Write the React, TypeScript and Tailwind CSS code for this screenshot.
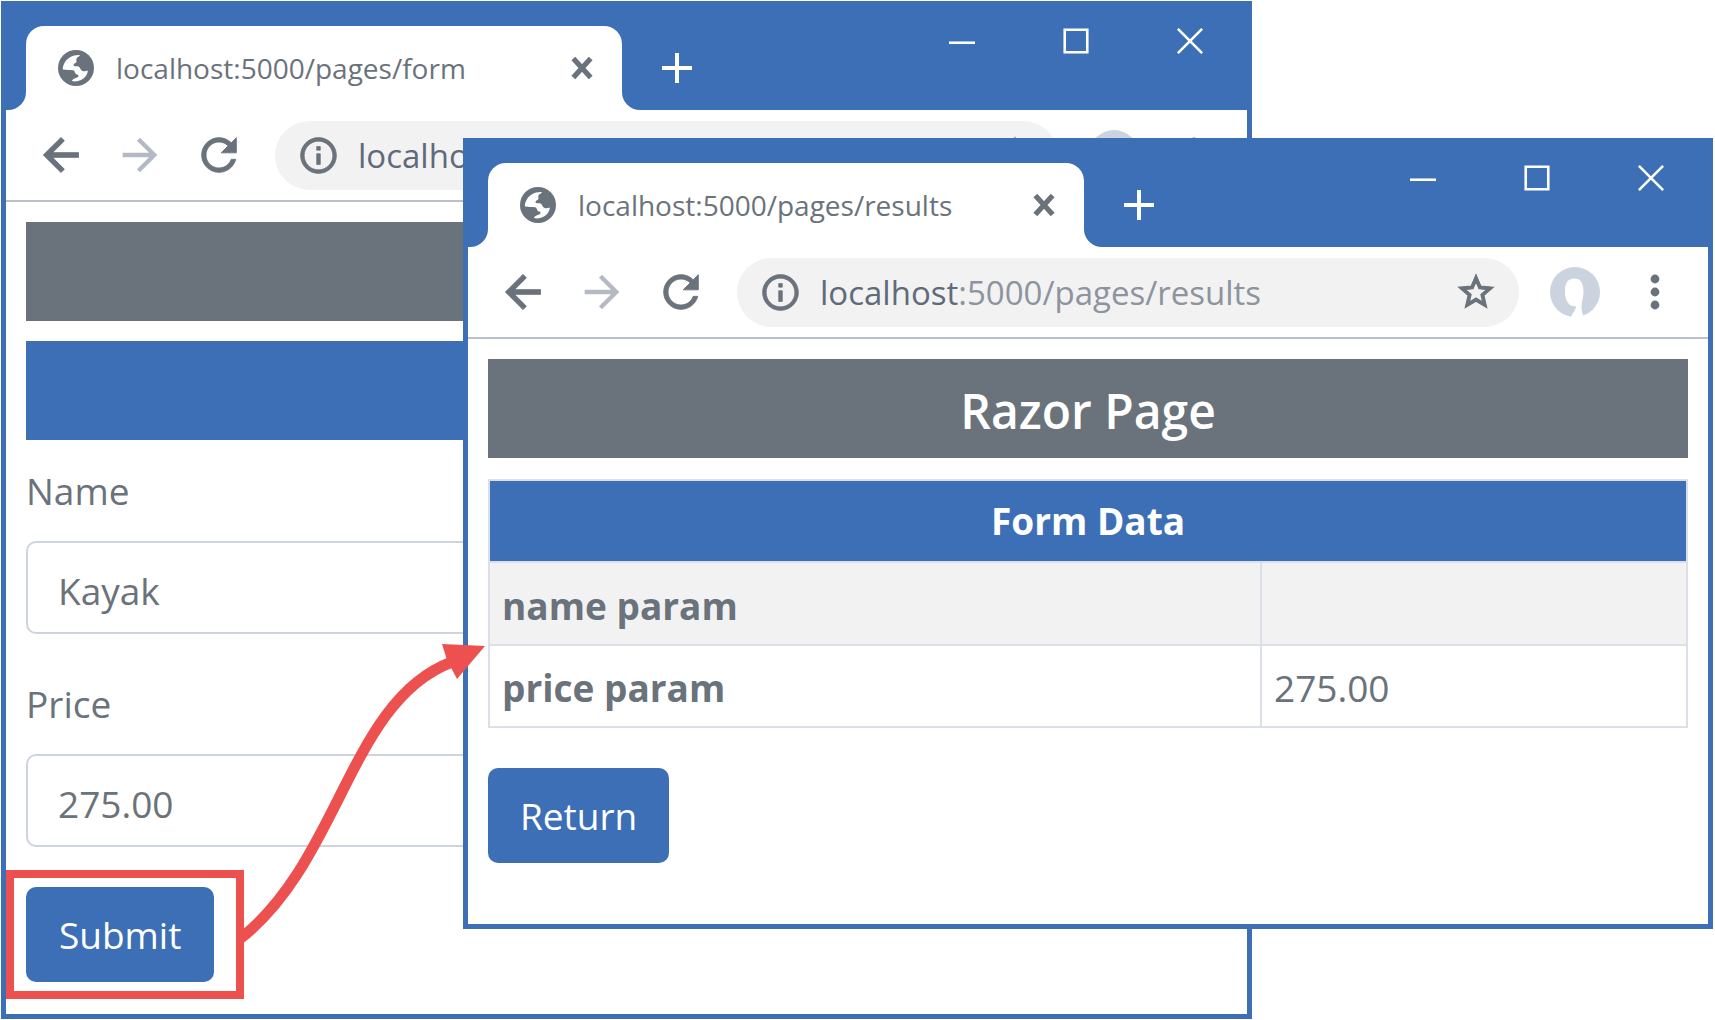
import type { ReactNode } from "react";

function GlobeIcon() {
  return (
    <svg viewBox="0 0 36 36" className="size-9 shrink-0" aria-hidden="true">
      <circle cx="18" cy="18" r="18" fill="#6a727b" />
      <path
        d="M22 5C15 4.500 9 8 6.500 13 5 16 4.500 18 5 19.500c3 .8 7 0 10 .8 2.500.7 1.500 2.700 3 3.700 1.500.8 2.500.8 2.500 2 0 1.500-2.500 1.500-4 2.500-1.500.8-2.500 1.500-2.500 2.500 5 1.200 10.500-.5 13.500-4.500 1.500-2 2.300-4 2.300-6-2 .8-4 1-5.800.2-2-1-1.500-3.200-3.500-4.200-2-.8-4.500.5-5-1.500-.3-1.500 2-1.500 2.800-2.800.7-1.200-.5-2.400.2-3.700.6-1.500 2.500-1.500 3.500-3.500z"
        fill="#fff"
      />
    </svg>
  );
}

function ProfileIcon() {
  return (
    <svg viewBox="0 0 50 50" className="size-[50px]" aria-hidden="true">
      <circle cx="25" cy="25" r="25" fill="#cbd3df" />
      <path
        d="M24 11.500c-6.500 0-9 5-9 12.500 0 7 1.500 11 5 14 2 1.500 5 1 6 1.500-.5 4-3 6-5 10.500h13c-1.500-3-2.500-6-2.500-10 0-5 2-9 2-16 0-8-3-12.500-9.500-12.500z"
        fill="#fff"
      />
    </svg>
  );
}

function MenuIcon() {
  return (
    <svg viewBox="0 0 10 36" className="h-9 w-[10px]" fill="#6a727b" aria-hidden="true">
      <circle cx="5" cy="5" r="4.400" />
      <circle cx="5" cy="18" r="4.400" />
      <circle cx="5" cy="31" r="4.400" />
    </svg>
  );
}

function Glyph({ d, weight, className }: { d: string; weight: number; className: string }) {
  return (
    <svg
      viewBox="0 0 24 24"
      className={className}
      fill="currentColor"
      stroke="currentColor"
      strokeWidth={weight}
      aria-hidden="true"
    >
      <path d={d} />
    </svg>
  );
}

const glyphs = {
  back: "M20 11H7.830l5.590-5.590L12 4l-8 8 8 8 1.410-1.410L7.830 13H20v-2z",
  forward: "M12 4l-1.410 1.410L16.170 11H4v2h12.170l-5.580 5.590L12 20l8-8z",
  reload:
    "M17.650 6.350C16.200 4.900 14.210 4 12 4c-4.420 0-7.990 3.580-7.990 8s3.570 8 7.990 8c3.730 0 6.840-2.550 7.730-6h-2.080c-.82 2.330-3.040 4-5.650 4-3.310 0-6-2.690-6-6s2.690-6 6-6c1.660 0 3.140.69 4.220 1.780L13 11h7V4l-2.350 2.350z",
  info: "M11 7h2v2h-2zm0 4h2v6h-2zm1-9C6.480 2 2 6.480 2 12s4.480 10 10 10 10-4.480 10-10S17.520 2 12 2zm0 18c-4.410 0-8-3.590-8-8s3.590-8 8-8 8 3.590 8 8-3.590 8-8 8z",
  star: "M22 9.240l-7.190-.62L12 2 9.190 8.630 2 9.240l5.460 4.730L5.820 21 12 17.270 18.180 21l-1.630-7.030L22 9.240zM12 15.400l-3.760 2.270 1-4.280-3.320-2.880 4.380-.38L12 6.100l1.710 4.040 4.380.38-3.320 2.880 1 4.280L12 15.400z",
};

function Strokes({ d, width, className }: { d: string; width: number; className: string }) {
  return (
    <svg
      viewBox="0 0 30 30"
      className={className}
      fill="none"
      stroke="currentColor"
      strokeWidth={width}
      aria-hidden="true"
    >
      <path d={d} />
    </svg>
  );
}

type BrowserProps = {
  host: string;
  path: string;
  className: string;
  children: ReactNode;
};

function BrowserWindow({ host, path, className, children }: BrowserProps) {
  return (
    <section className={`border-[5px] border-t-0 border-[#3c6fb5] bg-white ${className}`}>
      <header className="flex h-[109px] items-end justify-between bg-[#3c6fb5] pl-5">
        <div className="flex items-center">
          <div className="relative flex h-[84px] w-[596px] items-center rounded-t-[18px] bg-white pr-[27px] pl-8">
            <span className="absolute bottom-0 -left-5 size-5 bg-white">
              <span className="block size-5 rounded-br-[18px] bg-[#3c6fb5]" />
            </span>
            <span className="absolute -right-5 bottom-0 size-5 bg-white">
              <span className="block size-5 rounded-bl-[18px] bg-[#3c6fb5]" />
            </span>
            <GlobeIcon />
            <span className="grow pl-[22px] text-[28px] leading-9 text-[#6a727b]">
              {host + path}
            </span>
            <button aria-label="Close tab" className="text-[#6a727b]">
              <Strokes d="M5 4 25 26M25 4 5 26" width={6} className="size-[26px]" />
            </button>
          </div>
          <button aria-label="New tab" className="ml-10 text-white">
            <Strokes d="M15 0V30M0 15H30" width={4} className="size-[30px]" />
          </button>
        </div>
        <div className="mr-11 flex gap-[88px] self-start pt-[27px] text-white">
          <button aria-label="Minimize">
            <Strokes d="M0 17H30" width={3} className="size-[26px]" />
          </button>
          <button aria-label="Maximize">
            <Strokes d="M2 2H28V28H2Z" width={3} className="size-[26px]" />
          </button>
          <button aria-label="Close window">
            <Strokes d="M1 1 29 29M29 1 1 29" width={3} className="size-[26px]" />
          </button>
        </div>
      </header>
      <nav className="flex h-[92px] items-center border-b-2 border-[#b9c0ca] pr-12 pl-[29px] text-[#6a727b]">
        <button aria-label="Back">
          <Glyph d={glyphs.back} weight={0.5} className="size-[52px]" />
        </button>
        <button aria-label="Forward" className="ml-[27px] text-[#b4bac3]">
          <Glyph d={glyphs.forward} weight={0} className="size-[52px]" />
        </button>
        <button aria-label="Reload" className="ml-[27px]">
          <Glyph d={glyphs.reload} weight={0.4} className="size-[52px]" />
        </button>
        <div className="ml-[30px] flex h-[69px] grow items-center rounded-full bg-[#f2f2f2] pr-[22px] pl-[22px]">
          <Glyph d={glyphs.info} weight={0.4} className="size-[43px] shrink-0" />
          <p className="grow pt-[2px] pl-[18px] text-[33px] leading-10 text-[#8d949e]">
            <span className="text-[#5f6a7a]">{host}</span>
            {path}
          </p>
          <button aria-label="Bookmark">
            <Glyph d={glyphs.star} weight={0.6} className="size-[42px]" />
          </button>
        </div>
        <button aria-label="Profile" className="ml-[31px]">
          <ProfileIcon />
        </button>
        <button aria-label="Menu" className="ml-[50px]">
          <MenuIcon />
        </button>
      </nav>
      {children}
    </section>
  );
}

function Field({ id, label, value }: { id: string; label: string; value: string }) {
  return (
    <div className="flex flex-col gap-[22px]">
      <label htmlFor={id} className="leading-14">
        {label}
      </label>
      <input
        id={id}
        defaultValue={value}
        className="h-[93px] w-full rounded-[10px] border-2 border-[#cdd4de] px-[30px] pt-1.5"
      />
    </div>
  );
}

export default function App() {
  return (
    <main className="relative min-h-screen overflow-hidden bg-white pt-px pl-px font-['Open_Sans',sans-serif] text-[37px] text-[#6a727b]">
      <BrowserWindow host="localhost" path=":5000/pages/form" className="mr-[463px]">
        <form className="px-5 pt-5 pb-8" onSubmit={(e) => e.preventDefault()}>
          <div className="h-[99px] bg-[#6a727b]" />
          <div className="mt-5 h-[99px] bg-[#3c6fb5]" />
          <div className="mt-[23px] flex flex-col gap-[42px]">
            <Field id="name" label="Name" value="Kayak" />
            <Field id="price" label="Price" value="275.00" />
          </div>
          <div className="relative mt-10 w-fit">
            <button className="h-[95px] rounded-[10px] bg-[#3c6fb5] px-[33px] text-white">
              Submit
            </button>
            <span className="pointer-events-none absolute -top-[17px] -right-[30px] -bottom-[17px] -left-5 border-8 border-[#ec514f]" />
          </div>
        </form>
      </BrowserWindow>

      <BrowserWindow
        host="localhost"
        path=":5000/pages/results"
        className="absolute top-[138px] right-[2px] left-[463px]"
      >
        <div className="px-5 pt-5 pb-[61px]">
          <h1 className="bg-[#6a727b] pt-4 pb-[11px] text-center text-[48px] leading-[72px] font-semibold text-white">
            Razor Page
          </h1>
          <table className="mt-[21px] w-full border-collapse text-left leading-[56px]">
            <thead>
              <tr>
                <th
                  colSpan={2}
                  className="border-2 border-[#dbe0e8] bg-[#3c6fb5] pt-3 pb-3 text-center font-bold text-white"
                >
                  Form Data
                </th>
              </tr>
            </thead>
            <tbody>
              <tr className="bg-[#f2f2f2]">
                <th scope="row" className="w-[772px] border-2 border-[#dbe0e8] px-3 pt-[15px] pb-[10px]">
                  name param
                </th>
                <td className="border-2 border-[#dbe0e8] px-3" />
              </tr>
              <tr>
                <th scope="row" className="border-2 border-[#dbe0e8] px-3 pt-[14px] pb-[10px]">
                  price param
                </th>
                <td className="border-2 border-[#dbe0e8] px-3 pt-[14px] pb-[10px]">275.00</td>
              </tr>
            </tbody>
          </table>
          <button className="mt-10 block h-[95px] rounded-[10px] bg-[#3c6fb5] px-8 pt-px text-white">
            Return
          </button>
        </div>
      </BrowserWindow>

      <svg
        viewBox="0 0 250 310"
        className="pointer-events-none absolute top-[640px] left-[240px] h-[310px] w-[250px]"
        aria-hidden="true"
      >
        <path d="M1 298C100 220 110 60 212 22" fill="none" stroke="#ec514f" strokeWidth="11" />
        <path d="M202 4 245 6 217 39 207 20Z" fill="#ec514f" />
      </svg>
    </main>
  );
}
